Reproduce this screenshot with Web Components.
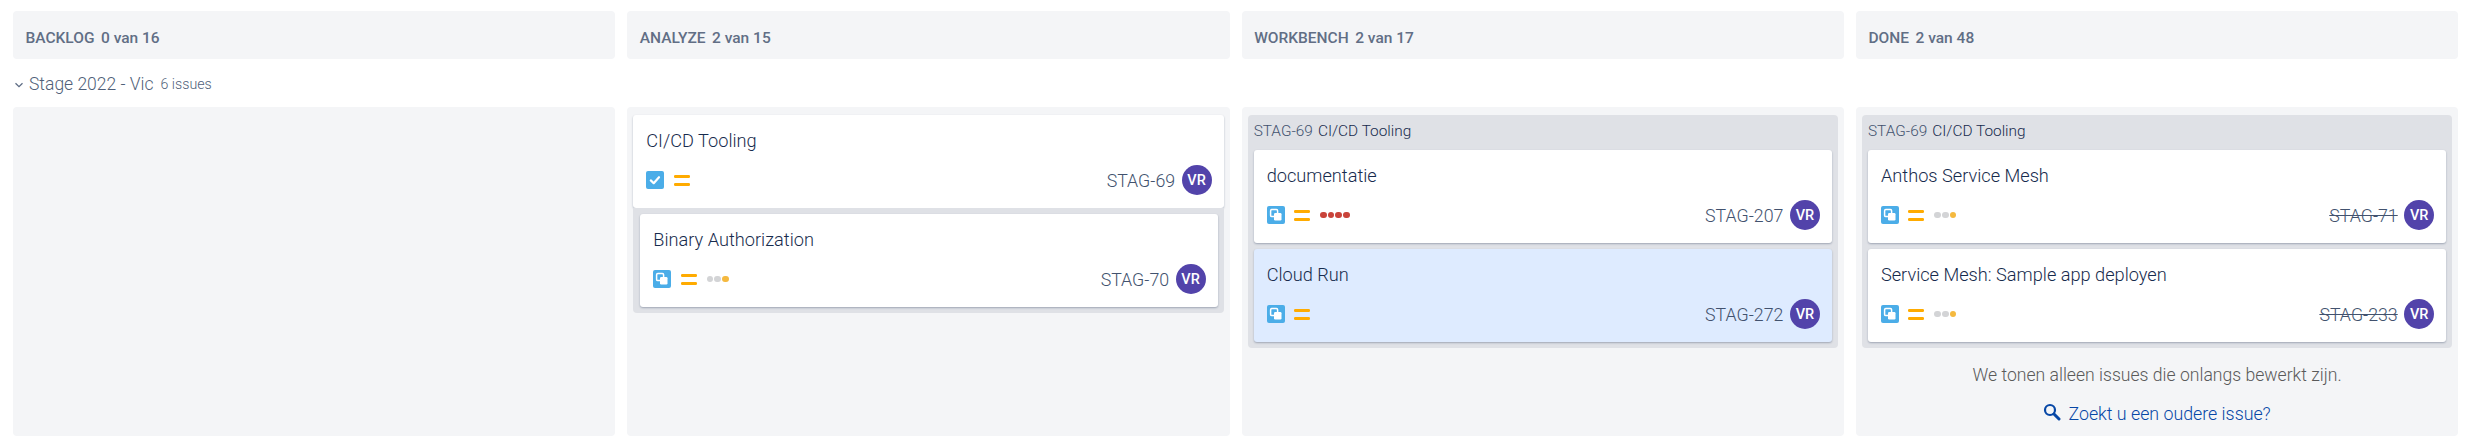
<!DOCTYPE html>
<html lang="nl"><head><meta charset="utf-8"><title>Board</title>
<style>
html,body{margin:0;background:#fff;font-family:Roboto,"Noto Sans",sans-serif;color:#172b4d}
</style></head><body>
<kan-board>
  <col-head name="BACKLOG" count="0 van 16"></col-head>
  <col-head name="ANALYZE" count="2 van 15"></col-head>
  <col-head name="WORKBENCH" count="2 van 17"></col-head>
  <col-head name="DONE" count="2 van 48"></col-head>
  <swim-lane name="Stage 2022 - Vic" count="6 issues"></swim-lane>
  <board-col></board-col>
  <board-col>
    <issue-card type="task" summary="CI/CD Tooling" key="STAG-69"></issue-card>
    <sub-list>
      <issue-card type="sub" est="3" summary="Binary Authorization" key="STAG-70"></issue-card>
    </sub-list>
  </board-col>
  <board-col>
    <parent-group>
      <issue-card type="sub" est="4" summary="documentatie" key="STAG-207"></issue-card>
      <issue-card type="sub" selected summary="Cloud Run" key="STAG-272"></issue-card>
    </parent-group>
  </board-col>
  <board-col>
    <parent-group>
      <issue-card type="sub" est="3" done summary="Anthos Service Mesh" key="STAG-71"></issue-card>
      <issue-card type="sub" est="3" done summary="Service Mesh: Sample app deployen" key="STAG-233"></issue-card>
    </parent-group>
    <older-hint></older-hint>
  </board-col>
</kan-board>
<script>
const def=(name,html)=>customElements.define(name,class extends HTMLElement{
  connectedCallback(){
    if(this.shadowRoot)return;
    const a=n=>this.getAttribute(n)||'';
    this.attachShadow({mode:'open'}).innerHTML=typeof html==='function'?html(a,this):html;
  }
});
def('kan-board',`<style>:host{display:grid;grid-template-columns:repeat(4,602.3px);column-gap:12.03px;grid-template-rows:48px 48px 329px;padding:11px 0 6px 13px}</style><slot></slot>`);
def('col-head',a=>`<style>:host{display:flex;align-items:center;padding:6px 0 0 12.5px;box-sizing:border-box;height:48px;background:#f4f5f7;border-radius:4px;color:#616e85;font-size:15.5px;font-weight:500}
.c{margin-left:6.5px}</style><span>${a('name')}</span><span class="c">${a('count')}</span>`);
def('swim-lane',a=>`<style>:host{grid-column:1/-1;display:flex;align-items:center;color:#505f79;margin-left:1px;padding-top:1px;font-weight:300}
svg{width:10px;height:8px;margin-right:5px;margin-top:3px}
.n{font-size:17.5px}.c{font-size:14.2px;margin-left:7px;margin-top:1px}</style>
<svg viewBox="0 0 10 8"><path d="M1.5 2.2 5 5.6 8.5 2.2" fill="none" stroke="#5e6c84" stroke-width="1.3"/></svg><span class="n">${a('name')}</span><span class="c">${a('count')}</span>`);
def('board-col',`<style>:host{display:block;background:#f4f5f7;border-radius:4px;padding:8px 6px 0;box-sizing:border-box;height:329px}</style><slot></slot>`);
def('sub-list',`<style>:host{display:block;background:#dfe1e6;border-radius:0 0 4px 4px;padding:6px 6px 6px 7px}</style><slot></slot>`);
def('parent-group',`<style>:host{display:flex;flex-direction:column;gap:6px;background:#dfe1e6;border-radius:4px;padding:0 6px 6px}
.h{height:35px;display:flex;align-items:center;font-size:15.4px;font-weight:300;margin-bottom:-6px;padding-bottom:3px;box-sizing:border-box;color:#172b4d}.k{color:#42526e;margin-right:5px}</style>
<div class="h"><span class="k">STAG-69</span><span>CI/CD Tooling</span></div><slot></slot>`);
const TYPE={
 task:`<rect width="18" height="18" rx="2" fill="#4bade8"/><path d="M4.8 9.4 7.7 12.2 13 6.2" fill="none" stroke="#fff" stroke-width="2.2" stroke-linecap="round" stroke-linejoin="round"/>`,
 sub:`<rect width="18" height="18" rx="2" fill="#4bade8"/><rect x="3.6" y="3.6" width="7" height="7" rx="1.2" fill="#4bade8" stroke="#fff" stroke-width="1.5"/><rect x="7" y="7" width="7.5" height="7.5" rx="1.2" fill="#fff"/>`
};
def('type-icon',a=>`<style>:host{display:block;width:18px;height:18px}svg{display:block}</style><svg width="18" height="18" viewBox="0 0 18 18">${TYPE[a('type')]}</svg>`);
def('prio-icon',`<style>:host{display:block;width:16px;height:12px}svg{display:block}</style><svg width="16" height="12" viewBox="0 0 16 12"><rect y="1" width="16" height="3" rx="1.2" fill="#ffab00"/><rect y="9" width="16" height="3" rx="1.2" fill="#ffab00"/></svg>`);
def('est-dots',a=>{
 const n=+a('n');
 const dots=n==4?['#c9433a','#c9433a','#c9433a','#c9433a']:['#d3d4d6','#d3d4d6','#f5b93f'];
 return `<style>:host{display:flex;gap:1px}i{display:block;width:6.6px;height:6.6px;border-radius:50%}</style>`+dots.map(c=>`<i style="background:${c}"></i>`).join('');
});
def('user-avatar',`<style>:host{display:flex;align-items:center;justify-content:center;width:30px;height:30px;border-radius:50%;background:#5243aa;color:#fff;font-size:14.5px;font-weight:500}</style>VR`);
def('issue-card',(a,el)=>`<style>:host{display:block;box-sizing:border-box;height:93px;padding:13px 12px 13px 13px;background:${el.hasAttribute('selected')?'#deebff':'#fff'};border-radius:3px;box-shadow:0 1px 2px rgba(9,30,66,.3)}
.t{height:26px;line-height:26px;font-size:18.2px;font-weight:300;color:#172b4d}
.f{display:flex;align-items:center;height:30px;margin-top:11px}
prio-icon{margin-left:9.5px}est-dots{margin-left:10px}
.k{margin-left:auto;margin-right:6.5px;font-size:17.8px;font-weight:300;color:#42526e;${el.hasAttribute('done')?'text-decoration:line-through;':''}}
</style><div class="t">${a('summary')}</div><div class="f"><type-icon type="${a('type')}"></type-icon><prio-icon></prio-icon>${a('est')?`<est-dots n="${a('est')}"></est-dots>`:''}<span class="k">${a('key')}</span><user-avatar></user-avatar></div>`);
def('older-hint',`<style>:host{display:block;text-align:center;font-weight:300}
.a{height:54px;display:flex;align-items:center;justify-content:center;font-size:17.6px;color:#5a5a5a;box-sizing:border-box}
.b{height:20px;display:flex;align-items:center;justify-content:center;gap:7px;margin-top:1px;font-size:17.8px;color:#0747a6}
svg{margin-top:-2px}</style><div class="a">We tonen alleen issues die onlangs bewerkt zijn.</div><div class="b"><svg width="18" height="18" viewBox="0 0 18 18"><circle cx="7" cy="7" r="5" fill="none" stroke="#0747a6" stroke-width="2.2"/><path d="M11 11 16 16" stroke="#0747a6" stroke-width="3" stroke-linecap="round"/></svg><span>Zoekt u een oudere issue?</span></div>`);
</script>
</body></html>
